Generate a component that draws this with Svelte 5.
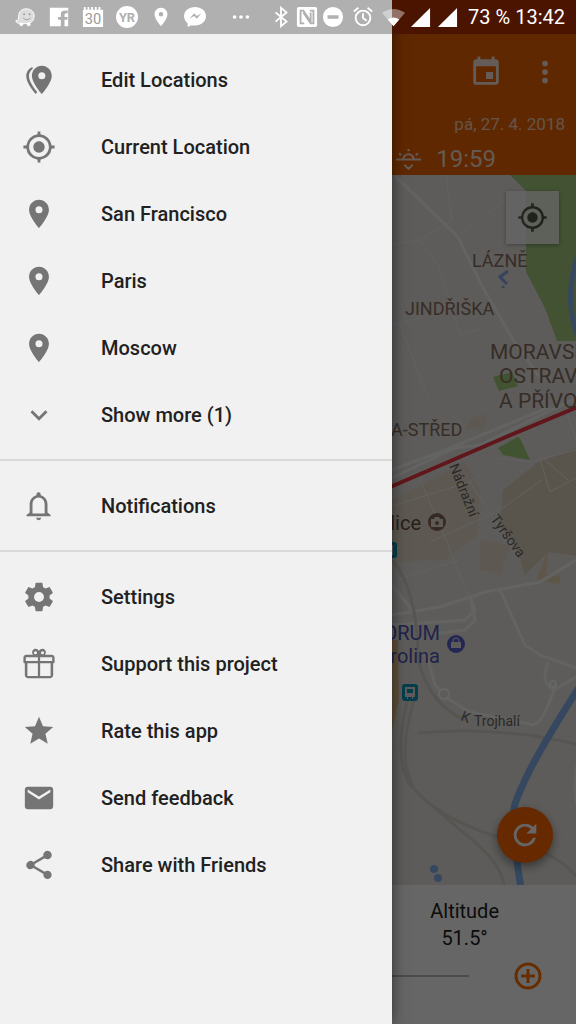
<script>
  const pin = 'M12 2C8.13 2 5 5.13 5 9c0 5.25 7 13 7 13s7-7.75 7-13c0-3.87-3.13-7-7-7zm0 9.5a2.5 2.5 0 0 1 0-5 2.5 2.5 0 0 1 0 5z';
  const target = 'M12 8c-2.21 0-4 1.79-4 4s1.79 4 4 4 4-1.79 4-4-1.79-4-4-4zm8.94 3A8.994 8.994 0 0 0 13 3.06V1h-2v2.06A8.994 8.994 0 0 0 3.06 11H1v2h2.06A8.994 8.994 0 0 0 11 20.94V23h2v-2.06A8.994 8.994 0 0 0 20.94 13H23v-2h-2.06zM12 19c-3.87 0-7-3.13-7-7s3.13-7 7-7 7 3.13 7 7-3.13 7-7 7z';
  const icons = {
    pin,
    target,
    pins: 'M14 2C10.13 2 7 5.13 7 9c0 5.25 7 13 7 13s7-7.75 7-13c0-3.87-3.13-7-7-7zm0 9.5a2.5 2.5 0 0 1 0-5 2.5 2.5 0 0 1 0 5zM7.3 2.8C4.700 3.900 3 6.300 3 9.200c0 4.300 3.800 9.300 6.600 12.600l1.200-1.300C8 17.100 4.900 12.700 4.900 9.200c0-2.100 1-3.900 2.700-5.100z',
    chevron: 'M16.59 8.59 12 13.17 7.41 8.59 6 10l6 6 6-6z',
    bell: 'M10 20.300h3.500a1.750 1.750 0 0 1-3.500 0zM18 16.500V10.800c0-3.100-1.900-5.700-4.800-6.400v-.6a1.500 1.500 0 0 0-3 0v.6C7.400 5.100 5.400 7.700 5.400 10.800v5.700l-2.200 1.800v1h17v-1zm-2 .8H7.400V10.800C7.400 8.100 9.200 6 11.700 6S16 8.100 16 10.800z',
    gear: 'M19.43 12.98c.04-.32.07-.64.07-.98s-.03-.66-.07-.98l2.110-1.650c.19-.15.24-.42.12-.64l-2-3.460c-.12-.22-.39-.3-.61-.22l-2.490 1c-.52-.4-1.080-.73-1.690-.98l-.38-2.650A.488.488 0 0 0 14 2h-4c-.25 0-.46.18-.49.42l-.38 2.650c-.61.25-1.170.59-1.690.98l-2.490-1c-.23-.09-.49 0-.61.22l-2 3.460c-.13.22-.07.49.12.64l2.110 1.650c-.04.32-.07.65-.07.98s.03.66.07.98l-2.110 1.650c-.19.15-.24.42-.12.64l2 3.460c.12.22.39.3.61.22l2.490-1c.52.4 1.080.73 1.690.98l.38 2.650c.03.24.24.42.49.42h4c.25 0 .46-.18.49-.42l.38-2.650c.61-.25 1.170-.59 1.690-.98l2.490 1c.23.09.49 0 .61-.22l2-3.460c.12-.22.07-.49-.12-.64zM12 15.500a3.500 3.500 0 1 1 0-7 3.500 3.500 0 0 1 0 7z',
    gift: 'M21 5.500h-4.800c.7-.8.9-2 .3-3-1-1.800-3.500-1.500-4.500.2-1-1.700-3.500-2-4.500-.2-.6 1-.4 2.200.3 3H3c-1.100 0-2 .9-2 2v3.200c0 .5.400.8.800.8H2V20c0 1.100.9 2 2 2h16c1.100 0 2-.9 2-2v-8.500h.2c.5 0 .8-.3.8-.8V7.500c0-1.100-.9-2-2-2zM14.500 3a1 1 0 1 1 0 2.200 1 1 0 0 1 0-2.200zm-5 0a1 1 0 1 1 0 2.200 1 1 0 0 1 0-2.200zM2.700 7.200h8.500v2.600H2.700zM11.200 20.500H3.800v-9h7.400zm9 0h-7.400v-9h7.400zm1.100-10.700h-8.500V7.200h8.500z',
    star: 'M12 17.27 18.18 21l-1.640-7.030L22 9.240l-7.190-.61L12 2 9.190 8.630 2 9.240l5.460 4.730L5.820 21z',
    mail: 'M20 4H4c-1.100 0-1.990.9-1.990 2L2 18c0 1.100.9 2 2 2h16c1.100 0 2-.9 2-2V6c0-1.100-.9-2-2-2zm0 4-8 5-8-5V6l8 5 8-5z',
    share: 'M18 16.080c-.76 0-1.440.3-1.960.77L8.910 12.700c.05-.23.09-.46.09-.7s-.04-.47-.09-.7l7.050-4.110A2.990 2.990 0 1 0 15 5c0 .24.04.47.09.7L8.040 9.810A2.990 2.990 0 1 0 6 15c.79 0 1.500-.31 2.040-.81l7.120 4.160c-.05.21-.08.43-.08.65a2.920 2.920 0 1 0 2.920-2.920z'
  };
  const sections = [
    [
      ['pins', 'Edit Locations'],
      ['target', 'Current Location'],
      ['pin', 'San Francisco'],
      ['pin', 'Paris'],
      ['pin', 'Moscow'],
      ['chevron', 'Show more (1)']
    ],
    [['bell', 'Notifications']],
    [
      ['gear', 'Settings'],
      ['gift', 'Support this project'],
      ['star', 'Rate this app'],
      ['mail', 'Send feedback'],
      ['share', 'Share with Friends']
    ]
  ];
</script>

<div class="screen">
  <main class="app">
    <header class="toolbar">
      <div class="actions">
        <button aria-label="Pick date">
          <svg viewBox="0 0 24 24"><path d="M17 12h-5v5h5zM16 1v2H8V1H6v2H5c-1.110 0-1.990.9-1.990 2L3 19a2 2 0 0 0 2 2h14c1.100 0 2-.9 2-2V5c0-1.100-.9-2-2-2h-1V1zm3 18H5V8h14z" /></svg>
        </button>
        <button aria-label="More options">
          <svg viewBox="0 0 24 24"><circle cx="12" cy="6" r="2" /><circle cx="12" cy="12" r="2" /><circle cx="12" cy="18" r="2" /></svg>
        </button>
      </div>
      <div class="date">pá, 27. 4. 2018</div>
      <div class="sunset">
        <svg class="line" viewBox="0 0 24 24" stroke-width="2">
          <path d="M0 12h7m10 0h7M7 12a5 5 0 0 1 10 0M7 12h10M8 17l4 4 4-4" />
          <path d="M12 2v2M3 6l2 2M21 6l-2 2" />
        </svg>
        <span>19:59</span>
      </div>
    </header>

    <section class="map" aria-label="Map">
      <svg class="tiles" viewBox="0 175 576 710" preserveAspectRatio="xMaxYMin slice">
        <rect y="175" width="576" height="710" fill="#e9e6e0" />
        <path d="M392 500 430 480 465 462 480 490 478 535 445 560 392 562z" fill="#e9dfce" />
        <path d="M470 418 488 414 484 428 466 430zM480 540 510 545 500 575 480 570z" fill="#e9dfce" />
        <path d="M538 462 576 448V556L548 552 525 575 515 545 500 525 503 490z" fill="#e2d5bd" />
        <path d="M536 580 548 550 546 574 560 576 560 584z" fill="#ead6b6" />
        <path d="M380 640h18l1 60-7 30h-12z" fill="#e8c88e" />
        <path d="M510 175 526 191V272L545 308 557 341H576V175z" fill="#a5cd80" />
        <path d="M493 377 512 372 518 386 499 391zM498 448 519 436 530 460 503 455z" fill="#a3cf78" />
        <g fill="none" stroke="#f4f3f0" stroke-width="1">
          <path d="M446 175 452 220 420 240 390 245M460 235 505 200M418 238 438 265 460 335 484 328M400 325 428 398M390 325 420 318" />
          <path d="M392 506 470 482 500 458 530 462 576 450M420 480 442 530 469 598M470 482 520 560M540 460 550 492 576 478M566 410 576 440M500 420 568 480M430 542 500 510 542 480M395 580 460 560" />
        </g>
        <g fill="none" stroke="#f8f7f5" stroke-width="3">
          <path d="M395 176 458 237 482 286 512 338 540 378" />
          <path d="M392 478 455 448 480 445 576 398M392 470 440 452 550 407" />
          <path d="M392 615 440 607 485 592 540 582 576 560M392 625 465 620 475 610 470 595 475 620 465 630 435 634M392 585 412 610" />
          <path d="M500 590 525 645 540 655 576 668M548 662Q540 685 554 690Q540 730 530 724L470 712M554 690 576 677M427 655 435 685 450 700 470 712" />
          <path d="M580 750Q570 790 580 815" />
        </g>
        <circle cx="444" cy="694" r="5" fill="#e9e6e0" stroke="#fff" stroke-width="2" />
        <circle cx="553" cy="684" r="3" fill="#e9e6e0" stroke="#fff" stroke-width="2" />
        <g fill="none" stroke="#d6d4ce" stroke-width="3">
          <path d="M392 560Q418 590 418 660Q430 705 465 720M418 733Q500 726 576 744M414 700Q396 760 415 790Q440 818 492 835Q555 850 576 876M410 690Q392 755 410 785Q430 805 470 838Q500 862 504 885" />
        </g>
        <path d="M580 686Q540 748 525 780T515 812Q514 850 521 888" fill="none" stroke="#84b5f0" stroke-width="7" />
        <path d="M580 250Q561 298 580 342" fill="none" stroke="#84b5f0" stroke-width="5" />
        <path d="M508 271 500 277 507 284M503 286v2" fill="none" stroke="#84a7ea" stroke-width="3" />
        <g fill="#84b5f0"><circle cx="434" cy="869" r="4" /><circle cx="438" cy="878" r="4" /></g>
        <path d="M388 488 506 437 580 406" fill="none" stroke="#f03842" stroke-width="4" />
        <g class="district">
          <text x="472" y="267">LÁZNĚ</text>
          <text x="405" y="315">JINDŘIŠKA</text>
          <text x="391" y="436">A-STŘED</text>
        </g>
        <g class="city">
          <text x="490" y="359">MORAVSK</text>
          <text x="499" y="383">OSTRAV</text>
          <text x="499" y="408">A PŘÍVO</text>
        </g>
        <g class="street">
          <text transform="translate(449 466) rotate(68)">Nádražní</text>
          <text transform="translate(490 519) rotate(54)">Tyršova</text>
          <text transform="translate(460 720) rotate(20)">K</text>
          <text x="474" y="726">Trojhalí</text>
        </g>
        <g class="place">
          <text x="421" y="530" text-anchor="end" fill="#6a5044">lice</text>
          <text x="440" y="640" text-anchor="end" fill="#5058b8">ORUM</text>
          <text x="440" y="663" text-anchor="end" fill="#5058b8">rolina</text>
        </g>
        <circle cx="437" cy="522" r="9" fill="#8b6a5c" />
        <path d="M431 519h3l1-2h4l1 2h3v8h-12z" fill="#e9dfcf" />
        <circle cx="437" cy="523" r="2" fill="#8b6a5c" />
        <circle cx="456" cy="644" r="9" fill="#5b62cf" />
        <path d="M451 642h10v6h-10z" fill="#e9e6e0" />
        <path d="M453 642v-1a3 3 0 0 1 6 0v1" fill="none" stroke="#e9e6e0" />
        <rect x="402" y="684" width="16" height="17" rx="3" fill="#0b9cc0" />
        <path d="M405 687h10v10h-2v2h-1v-2h-4v2h-1v-2h-2z" fill="#e9e6e0" />
        <path d="M407 689h6v4h-6z" fill="#0b9cc0" />
        <rect x="382" y="542" width="15" height="16" rx="3" fill="#0b9cc0" />
        <path d="M385 545h8v10h-8z" fill="#e9e6e0" />
      </svg>
      <button class="locate" aria-label="My location"><svg viewBox="0 0 24 24"><path d={target} /></svg></button>
      <button class="refresh" aria-label="Refresh">
        <svg viewBox="0 0 24 24"><path d="M17.65 6.350A7.958 7.958 0 0 0 12 4a8 8 0 1 0 7.730 10h-2.080A6 6 0 1 1 12 6c1.660 0 3.140.69 4.220 1.780L13 11h7V4z" /></svg>
      </button>
    </section>

    <footer class="panel">
      <div class="reading"><span>Altitude</span><span>51.5°</span></div>
      <div class="time">
        <span class="track"></span>
        <button aria-label="Later">
          <svg class="line" viewBox="0 0 28 28" stroke-width="3"><circle cx="14" cy="14" r="12" /><path d="M14 7v14M7 14h14" /></svg>
        </button>
      </div>
    </footer>
  </main>

  <div class="scrim"></div>

  <nav class="drawer" aria-label="Main menu">
    {#each sections as items}
      <ul>
        {#each items as [icon, label]}
          <li>
            <button>
              <svg viewBox="0 0 24 24" aria-hidden="true"><path d={icons[icon]} fill-rule="evenodd" /></svg>
              <span>{label}</span>
            </button>
          </li>
        {/each}
      </ul>
    {/each}
  </nav>

  <div class="status">
    <div class="apps">
      <svg viewBox="0 0 24 24">
        <path d="M13 3c5 0 9 3 9 8 0 4-2 7-6 8H7c-3 0-5-1-5-3 3 0 3-2 3-5 0-5 4-8 8-8z" fill="#ddd" stroke="#fff" stroke-width="1" />
        <circle cx="8" cy="20" r="2" /><circle cx="16" cy="20" r="2" />
        <circle cx="11" cy="9" r="1" fill="#999" /><circle cx="17" cy="9" r="1" fill="#999" />
        <path d="M10 13q4 4 8 0" fill="none" stroke="#999" />
      </svg>
      <svg viewBox="0 0 24 24"><path d="M2 2h20v20h-4v-7h3l.5-3H18v-2q0-2 2-2h1.500V5H19q-5 0-5 4v3h-3v3h3v7H2z" /></svg>
      <svg viewBox="0 0 24 24">
        <path d="M1 4h22v19H1zM2 1h2v4H2zM6 1h2v4H6zM10 1h2v4h-2zM14 1h2v4h-2zM18 1h2v4h-2z" />
        <text class="glyph wide" x="12" y="20">30</text>
      </svg>
      <svg viewBox="0 0 24 24"><circle cx="12" cy="12" r="12" /><text class="glyph" x="12" y="17">YR</text></svg>
      <svg viewBox="0 0 24 24"><path d={pin} /></svg>
      <svg viewBox="0 0 24 24"><path d="M12 1C5.500 1 0 5 0 11c0 3 1.500 6 4 8v4l4-2c1 .3 2 .4 4 .4 6.500 0 12-4.400 12-10.400S18.500 1 12 1zm-6 13 5-6 3 3 5-3-5 6-3-3z" fill-rule="evenodd" /></svg>
      <svg class="more" viewBox="0 0 24 24"><circle cx="5" cy="12" r="2" /><circle cx="12" cy="12" r="2" /><circle cx="19" cy="12" r="2" /></svg>
    </div>
    <div class="system">
      <svg class="line" viewBox="0 0 24 24" stroke-width="2"><path d="m6 7 12 10-6 5V2l6 5L6 17" /></svg>
      <svg viewBox="0 0 24 24"><rect x="1" y="1" width="22" height="22" rx="2" /><path d="M9 19H5V5h3l8 12V7M15 5h4v14h-3L8 7" fill="none" stroke="#b0b0b0" stroke-width="2" /></svg>
      <svg viewBox="0 0 24 24"><path d="M12 1a11 11 0 1 0 0 22 11 11 0 0 0 0-22zM6 10h12v4H6z" fill-rule="evenodd" /></svg>
      <svg class="line apart" viewBox="0 0 24 24" stroke-width="2"><circle cx="12" cy="13" r="8" /><path d="M12 8v5l4 3M2 6l5-4M22 6l-5-4" /></svg>
      <svg class="signal apart" viewBox="0 0 24 24"><path d="M0 7q12-8 24 0L12 21z" opacity=".4" /><path d="M6 14q6-4 12 0l-6 7z" /></svg>
      <svg class="signal" viewBox="0 0 24 24"><path d="M2 22h20V2z" /></svg>
      <svg class="signal" viewBox="0 0 24 24"><path d="M2 22h20V2z" /></svg>
      <span>73 %</span>
      <time>13:42</time>
    </div>
  </div>
</div>

<style>
  :global(body) { margin: 0; }
  .screen {
    position: relative;
    min-height: 100vh;
    overflow: hidden;
    font-family: Roboto, "Noto Sans", sans-serif;
    font-size: 20px;
    color: #212121;
  }
  svg { display: block; fill: currentColor; }
  .line { fill: none; stroke: currentColor; }
  button {
    margin: 0;
    padding: 0;
    border: 0;
    background: none;
    color: inherit;
    font: inherit;
  }

  .app { display: flex; flex-direction: column; min-height: 100vh; }
  .toolbar {
    display: flex;
    flex-direction: column;
    align-items: flex-end;
    padding-top: 55px;
    height: 120px;
    background: #ef6400;
    color: #fff;
  }
  .actions { display: flex; gap: 25px; padding-right: 14px; opacity: .85; }
  .actions svg { width: 34px; height: 34px; }
  .date { padding: 24px 11px 0 0; font-size: 17px; line-height: 22px; opacity: .7; }
  .sunset { display: flex; align-items: center; gap: 15px; padding: 10px 80px 0 0; font-size: 24px; line-height: 28px; opacity: .8; }
  .sunset svg { width: 25px; height: 25px; }

  .map { position: relative; flex: 1; min-height: 400px; }
  .tiles { position: absolute; inset: 0; width: 100%; height: 100%; }
  .district { font-size: 18px; fill: #8a7062; }
  .city { font-size: 21px; fill: #8a7062; }
  .street { font-size: 14px; fill: #6c6865; }
  .place { font-size: 20px; }
  .locate {
    position: absolute;
    top: 16px;
    right: 17px;
    padding: 11px;
    background: #fff;
    color: #333;
    opacity: .75;
    box-shadow: 0 1px 4px #0006;
  }
  .locate svg { width: 31px; height: 31px; }
  .refresh {
    position: absolute;
    right: 23px;
    bottom: 22px;
    padding: 11px;
    border-radius: 50%;
    background: #ff6800;
    color: #fff;
    box-shadow: 0 4px 10px #0006;
  }
  .refresh svg { width: 34px; height: 34px; }

  .panel { display: flex; flex-direction: column; height: 139px; background: #fff; }
  .reading {
    display: flex;
    flex-direction: column;
    align-items: center;
    align-self: flex-end;
    padding: 13px 77px 0 0;
    line-height: 27px;
  }
  .time { display: flex; align-items: center; gap: 45px; padding: 10px 34px 0 24px; }
  .track { flex: 1; height: 2px; background: #bbb; }
  .time button { color: #ff7400; }
  .time svg { width: 28px; height: 28px; }

  .scrim { position: absolute; inset: 0; background: rgb(0 0 0 / .6); }

  .drawer {
    position: absolute;
    inset: 0 auto 0 0;
    box-sizing: border-box;
    width: 68%;
    padding-top: 35px;
    background: #f1f1f1;
    box-shadow: 0 0 14px #0008;
  }
  ul { margin: 0; padding: 11px 0; list-style: none; }
  ul + ul { border-top: 2px solid #d9d9d9; }
  li button {
    display: flex;
    align-items: center;
    gap: 45px;
    width: 100%;
    height: 67px;
    padding: 0 22px;
    font-weight: 500;
    text-align: left;
  }
  li svg { width: 34px; height: 34px; color: #757575; }

  .status {
    position: absolute;
    inset: 0 0 auto 0;
    display: flex;
    justify-content: space-between;
    align-items: center;
    height: 34px;
    padding: 0 11px 0 14px;
    background: linear-gradient(90deg, #b0b0b0 68%, #4a1400 68%);
    color: #fff;
  }
  .apps, .system { display: flex; align-items: center; }
  .apps { gap: 12px; }
  .status svg { width: 22px; height: 22px; }
  .status .more { margin-left: 12px; }
  .system { gap: 4px; }
  .status .signal { width: 23px; height: 23px; }
  .status .apart { margin-left: 4px; }
  .system span { margin: 0 1px 0 5px; }
  .glyph { font-size: 14px; font-weight: 700; text-anchor: middle; fill: #b0b0b0; }
  .wide { font-size: 16px; font-weight: 400; fill: #999; }
</style>
